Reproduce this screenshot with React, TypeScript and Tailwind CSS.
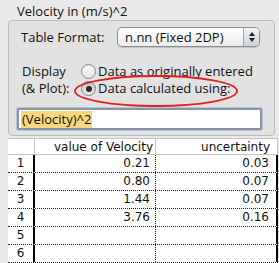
import React from "react";

const rows = [
  ["1", "0.21", "0.03"],
  ["2", "0.80", "0.07"],
  ["3", "1.44", "0.07"],
  ["4", "3.76", "0.16"],
  ["5", "", ""],
  ["6", "", ""],
];

function Radio({ on }: { on?: boolean }) {
  return (
    <span
      className={
        on
          ? "w-[15px] h-[15px] rounded-full border border-[#7c7c7c] bg-gradient-to-b from-[#c4c4c4] to-[#efefef] flex items-center justify-center shrink-0"
          : "w-[15px] h-[15px] rounded-full border border-[#8c8c8c] bg-gradient-to-b from-white to-[#e2e2e2] flex items-center justify-center shrink-0 shadow-[inset_0_1px_1px_rgba(0,0,0,0.12)]"
      }
    >
      {on && <span className="w-[6px] h-[6px] rounded-full bg-[#2b2b2b]" />}
    </span>
  );
}

export default function App() {
  return (
    <div className="relative w-[279px] h-[263px] overflow-hidden bg-[#e9e9e9] text-[#111] font-['Open_Sans',sans-serif]">
      <div className="h-[20px] pl-[17px] pt-[3px] text-[13px] leading-[16px]">Velocity in (m/s)^2</div>

      <div className="ml-[8px] w-[267px] h-[116px] rounded-[4px] border border-[#bcbcbc] bg-[#e2e2e2] flex flex-col">
        <div className="flex items-center h-[20px] mt-[6px]">
          <span className="pl-[12px] w-[108px] text-[13px] leading-[16px]">Table Format:</span>
          <div className="flex w-[143px] h-[20px] rounded-[5px] border border-[#8e8e8e] bg-gradient-to-b from-white to-[#ececec] shadow-[0_1px_1px_rgba(0,0,0,0.15)] overflow-hidden">
            <span className="flex-1 pl-[7px] text-[13px] leading-[18px]">n.nn (Fixed 2DP)</span>
            <span className="w-[16px] border-l border-[#9ba5b5] bg-gradient-to-b from-[#f1f3f7] to-[#cdd4e0] flex flex-col items-center justify-center gap-[2px]">
              <svg width="6" height="4" viewBox="0 0 6 4"><path d="M3 0 L6 4 L0 4 Z" fill="#222" /></svg>
              <svg width="6" height="4" viewBox="0 0 6 4"><path d="M0 0 L6 0 L3 4 Z" fill="#222" /></svg>
            </span>
          </div>
        </div>

        <div className="flex mt-[16px] text-[13px] leading-[17px]">
          <div className="pl-[13px] w-[72px]">
            <div>Display</div>
            <div>(&amp; Plot):</div>
          </div>
          <div className="flex flex-col">
            <div className="flex items-center gap-[2px] h-[17px]">
              <Radio />
              <span>Data as originally entered</span>
            </div>
            <div className="flex items-center gap-[2px] h-[17px]">
              <Radio on />
              <span>Data calculated using:</span>
            </div>
          </div>
        </div>

        <div className="ml-[8px] mt-[11px] w-[245px] h-[22px] rounded-[2px] border-2 border-[#8795aa] bg-white flex items-center pl-[2px] shadow-[0_0_0_1px_rgba(140,158,184,0.45)]">
          <span className="bg-[#fbd67c] text-[13px] leading-[17px] px-[1px]">(Velocity)^2</span>
        </div>
      </div>

      <div className="ml-[8px] mt-[2px] w-[270px] bg-white text-[12px] font-['DejaVu_Sans',sans-serif]">
        <div className="flex h-[17px] border-t border-b border-[#c6c6c6] leading-[16px]">
          <div className="w-[27px] border-r border-[#c6c6c6]" />
          <div className="w-[121px] border-r border-[#c6c6c6] text-right pr-[2px]">value of Velocity</div>
          <div className="w-[122px] border-r border-[#c6c6c6] text-right pr-[7px]">uncertainty</div>
        </div>
        {rows.map(([n, v, u]) => (
          <div key={n} className="flex h-[18px] border-b border-dotted border-[#222] leading-[17px]">
            <div className="w-[27px] border-r-2 border-black text-center">{n}</div>
            <div className="w-[121px] border-r border-dotted border-[#222] text-right pr-[5px]">{v}</div>
            <div className="w-[122px] border-r-2 border-black text-right pr-[7px]">{u}</div>
          </div>
        ))}
      </div>

      <svg className="absolute left-[72px] top-[72px]" width="170" height="40" viewBox="0 0 170 40">
        <ellipse cx="84" cy="19" rx="81" ry="15" fill="none" stroke="#e0201c" strokeWidth="1.8" />
      </svg>
    </div>
  );
}
